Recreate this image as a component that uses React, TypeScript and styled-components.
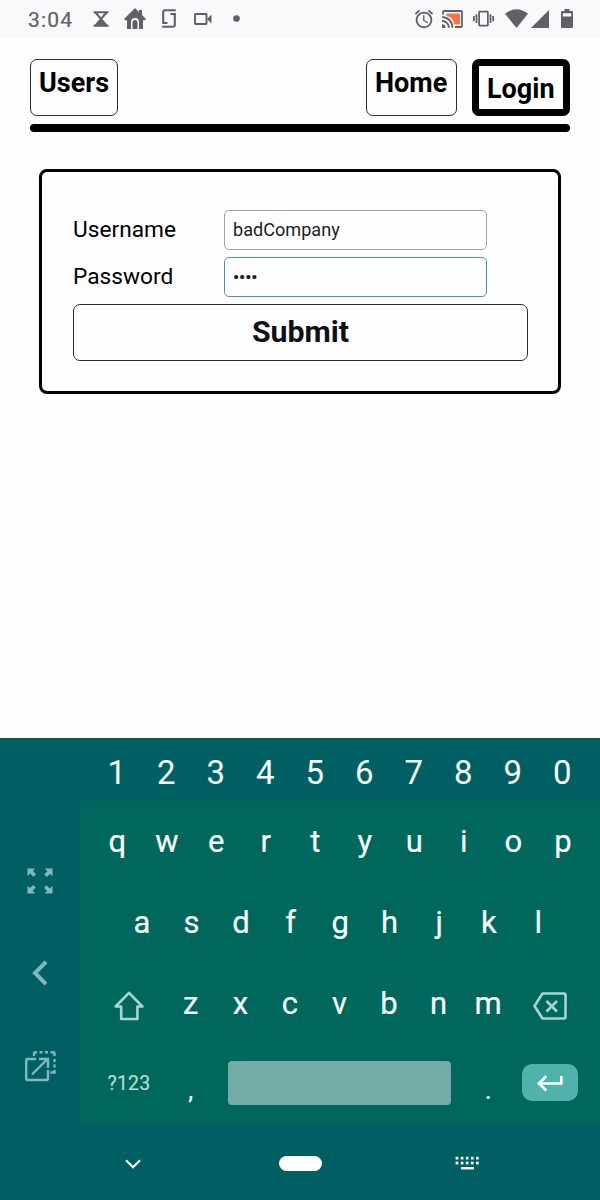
import React from "react";
import styled, { createGlobalStyle } from "styled-components";
import { MdAlarm, MdVibration } from "react-icons/md";

const GlobalStyle = createGlobalStyle`
  * { box-sizing: border-box; }
  body { margin: 0; background: #fefdff; font-family: Roboto, sans-serif; }
`;

const Screen = styled.div`
  width: 600px;
  height: 1200px;
  display: flex;
  flex-direction: column;
  overflow: hidden;
  background: #fefdff;
  color: #000;
`;

const StatusBar = styled.div`
  height: 38px;
  flex: none;
  display: flex;
  align-items: center;
  padding: 0 27px 1px;
  background: #f9f8fb;
  color: #626065;
`;

const Clock = styled.span`
  width: 46px;
  font-size: 21px;
  -webkit-text-stroke: 0.2px #626065;
  letter-spacing: 1.2px;
  line-height: 24px;
  padding: 2px 0 0 1px;
  white-space: nowrap;
`;

const StatusItem = styled.span<{ $gap: number }>`
  display: flex;
  margin-left: ${(p) => p.$gap}px;
`;

const StatusRight = styled.div`
  margin-left: auto;
  display: flex;
  align-items: center;
`;

const Header = styled.header`
  margin: 21px 30px 0;
  padding-bottom: 8px;
  display: flex;
  gap: 15px;
  height: 65px;
`;

const NavButton = styled.a<{ $active?: boolean }>`
  display: block;
  height: 57px;
  padding: 8px 8px 4px;
  border: ${(p) => (p.$active ? "7px solid #000" : "1.5px solid #2b2b2d")};
  border-radius: 7px;
  font-size: 27px;
  line-height: 31px;
  font-weight: 700;
  white-space: nowrap;
`;

const UsersLink = styled(NavButton)`
  width: 88px;
  margin-right: auto;
`;

const HomeLink = styled(NavButton)`
  width: 91px;
`;

const LoginLink = styled(NavButton)`
  width: 98px;
`;

const Rule = styled.hr`
  height: 8px;
  margin: 0 30px;
  border: 0;
  border-radius: 4px;
  background: #000;
  flex: none;
`;

const LoginForm = styled.form`
  margin: 37px 39px 0;
  height: 225px;
  flex: none;
  padding: 38px 31px 0;
  border: 3px solid #000;
  border-radius: 8px;
`;

const Field = styled.label`
  display: flex;
  align-items: center;
  height: 39px;
  margin-bottom: 8px;
`;

const FieldName = styled.span`
  width: 151px;
  font-size: 22.7px;
`;

const TextInput = styled.input<{ $focused?: boolean }>`
  width: 263px;
  height: 40px;
  padding: 0 8px;
  border: 1px solid ${(p) => (p.$focused ? "#4f8cc4" : "#a3a2a6")};
  border-radius: 5px;
  outline: 0;
  background: transparent;
  color: #1d1c20;
  font: ${(p) => (p.$focused ? "700 17px" : "18.1px")} Roboto, sans-serif;
`;

const Submit = styled.button`
  display: block;
  width: 455px;
  height: 57px;
  padding: 0 0 2px;
  border: 1.5px solid #2b2b2d;
  border-radius: 7px;
  background: transparent;
  color: #111014;
  font: 700 30.3px Roboto, sans-serif;
`;

const Keyboard = styled.section`
  margin-top: auto;
  height: 462px;
  flex: none;
  display: grid;
  grid-template: 387px 75px / 80px 520px;
  background: #005f63;
  color: #f7fffd;
`;

const SideRail = styled.div`
  display: flex;
  flex-direction: column;
  align-items: center;
  padding-top: 130px;
  color: #7fb8c0;
`;

const RailButton = styled.span<{ $height: number }>`
  height: ${(p) => p.$height}px;
  display: flex;
`;

const Keys = styled.div`
  display: flex;
  flex-direction: column;
`;

const NumberRow = styled.div`
  height: 63px;
  padding: 5px 13px 0 12px;
  display: grid;
  grid-template-columns: repeat(10, 1fr);
  align-items: center;
  text-align: center;
  font-size: 33px;
`;

const LetterPad = styled.div`
  height: 324px;
  display: grid;
  grid-template-rows: repeat(4, 81px);
  background: #00675d;
  -webkit-text-stroke: 0.2px currentColor;
`;

const LetterRow = styled.div<{ $inset?: number; $columns: string }>`
  padding: 0 ${(p) => (p.$inset ?? 0) + 12.4}px 0 ${(p) => (p.$inset ?? 0) + 12.6}px;
  display: grid;
  grid-template-columns: ${(p) => p.$columns};
  align-items: center;
  justify-items: center;
  font-size: 31px;
`;

const ShiftRow = styled(LetterRow)`
  padding: 0 13px 1px 12px;
`;

const BottomRow = styled(LetterRow)`
  padding: 0 13px 3px 12px;
`;

const IconKey = styled.span`
  display: flex;
  padding-top: 5px;
  color: #a9d5d1;
`;

const SymbolsKey = styled.span`
  color: #b4dbd6;
  font-size: 19.5px;
  letter-spacing: 0.2px;
`;

const PunctuationKey = styled.span`
  padding-top: 15px;
  font-size: 25px;
`;

const SpaceBar = styled.span`
  width: 223px;
  height: 44px;
  border-radius: 4px;
  background: #72aba8;
`;

const EnterKey = styled.span`
  width: 56px;
  height: 37px;
  margin-bottom: 2px;
  display: flex;
  align-items: center;
  justify-content: center;
  padding-top: 2px;
  border-radius: 10px;
  background: #4fb3ab;
`;

const SystemNav = styled.div`
  grid-column: 1 / 3;
  display: flex;
  align-items: center;
  justify-content: space-between;
  padding: 2px 120px 0 125px;
`;

const HomePill = styled.span`
  width: 43px;
  height: 15px;
  margin-left: 5px;
  border-radius: 8px;
  background: #fff;
`;

const HourglassIcon = () => (
  <svg width="16" height="16" viewBox="0 0 16 16" fill="none" stroke="currentColor" strokeWidth="2">
    <path d="M.5 1.2h15M.5 14.8h15" />
    <path d="M2.5 1.5 8 8l5.5-6.5M2.5 14.5 8 8l5.5 6.5" />
    <path d="M8 8.5 12 14H4z" fill="currentColor" stroke="none" />
  </svg>
);

const HouseIcon = () => (
  <svg width="22" height="21" viewBox="0 0 22 21" fill="currentColor">
    <path d="M11 0 15 4V2h3v5l4 4-1.2 1.2H19V21h-4v-7a4 4 0 0 0-8 0v7H3v-8.8H1.2L0 11z" />
    <path d="M8.500 21v-6.500a2.500 2.500 0 0 1 5 0V21z" />
  </svg>
);

const DeviceIcon = () => (
  <svg width="14" height="19" viewBox="0 0 14 19" fill="none" stroke="currentColor" strokeWidth="2.1">
    <path d="M5.500 14H1.200V3Q1.200 1.300 2.900 1.300H13.800" />
    <path d="M8.500 5H12.800V16q0 1.700-1.700 1.700H.200" />
  </svg>
);

const CameraIcon = () => (
  <svg width="18" height="12" viewBox="0 0 18 12" fill="none" stroke="currentColor" strokeWidth="1.9">
    <rect x="1" y="1" width="11.5" height="10" rx=".5" />
    <path d="M13 6 17.500 1.500v9z" fill="currentColor" stroke="none" />
  </svg>
);

const DotIcon = () => (
  <svg width="7" height="7" viewBox="0 0 7 7" fill="currentColor">
    <circle cx="3.5" cy="3.5" r="3.3" />
  </svg>
);

const CastIcon = () => (
  <svg width="21" height="18" viewBox="0 0 21 18" fill="none" stroke="currentColor" strokeWidth="1.8">
    <path d="M4.500 3.500h13.500v11h-5.700A10 10 0 0 0 4.500 6z" fill="#ff7043" stroke="none" />
    <path d="M1 4.500V2q0-1 1-1h17q1 0 1 1v14q0 1-1 1h-6" />
    <path d="M0 7.200A10.300 10.300 0 0 1 10.500 17.800M0 11a6.600 6.600 0 0 1 6.800 6.800" />
    <path d="M0 14.300A3.500 3.500 0 0 1 3.600 18H0z" fill="currentColor" stroke="none" />
  </svg>
);

const WifiIcon = () => (
  <svg width="23" height="19" viewBox="0 0 23 19" fill="currentColor">
    <path d="M0 4.800Q11.500-4.200 23 4.800L11.500 19z" />
  </svg>
);

const SignalIcon = () => (
  <svg width="18" height="18" viewBox="0 0 18 18" fill="currentColor">
    <path d="M18 0v18H0z" />
  </svg>
);

const BatteryIcon = () => (
  <svg width="12" height="19" viewBox="0 0 12 19" fill="currentColor">
    <path
      fillRule="evenodd"
      d="M3.5 0h5v2H11q1 0 1 1v15q0 1-1 1H1q-1 0-1-1V3q0-1 1-1h2.500zM1.800 4.200v3.200h8.400V4.200z"
    />
  </svg>
);

const ExpandIcon = () => (
  <svg width="26" height="26" viewBox="0 0 26 26" fill="currentColor">
    {[0, 90, 180, 270].map((angle) => (
      <path
        key={angle}
        transform={`rotate(${angle} 13 13)`}
        d="M.5.5h7.8L6 3l3 3.2-2.6 2.6L3.2 5.6.5 8.3z"
      />
    ))}
  </svg>
);

const BackIcon = () => (
  <svg width="16" height="26" viewBox="0 0 16 26" fill="none" stroke="currentColor" strokeWidth="4">
    <path d="M14 1.800 3 13l11 11.200" />
  </svg>
);

const PopOutIcon = () => (
  <svg width="31" height="31" viewBox="0 0 31 31" fill="none" stroke="currentColor" strokeWidth="2.4">
    <path d="M11 8H2.500Q1.200 8 1.200 9.500v18Q1.200 29 2.500 29h19q1.500 0 1.500-1.500V19" />
    <path d="M7 23.500 22 8.500M14 8h9v9" />
    <path d="M9 5V2.500Q9 1.200 10.500 1.200H12M14.500 1.200h3M20 1.200h3M25.500 1.200H28q1.500 0 1.500 1.300V5M29.500 8v3M29.500 13.500v3M29.500 19v2.500h-4" />
  </svg>
);

const ShiftIcon = () => (
  <svg width="30" height="30" viewBox="0 0 30 30" fill="none" stroke="currentColor" strokeWidth="2.6" strokeLinejoin="round">
    <path d="M15 1.800 28.400 15.500h-5V28H7.200V15.500H1.600z" />
  </svg>
);

const BackspaceIcon = () => (
  <svg width="34" height="28" viewBox="0 0 34 28" fill="none" stroke="currentColor" strokeWidth="2.6" strokeLinejoin="round">
    <path d="M9.500 1.500H31q1.500 0 1.500 1.500v22q0 1.500-1.500 1.500H9.500L1.500 14z" />
    <path d="m13.500 9 10.500 10.500M24 9 13.500 19.500" />
  </svg>
);

const EnterIcon = () => (
  <svg width="26" height="18" viewBox="0 0 26 18" fill="none" stroke="#fff" strokeWidth="2.7">
    <path d="M24.300 2v7.500H2M9.300 2 2 9.500 9.300 16.500" />
  </svg>
);

const HideIcon = () => (
  <svg width="16" height="10" viewBox="0 0 16 10" fill="none" stroke="#fff" strokeWidth="2.200">
    <path d="m1 1.200 7 7 7-7" />
  </svg>
);

const KeyboardIcon = () => (
  <svg width="25" height="15" viewBox="0 0 25 15" fill="#fff">
    {[0, 1, 2, 3, 4].map((i) => (
      <React.Fragment key={i}>
        <rect x={0.6 + i * 5.1} y="0.8" width="2.7" height="2.7" />
        <rect x={0.6 + i * 5.1} y="5.7" width="2.7" height="2.7" />
      </React.Fragment>
    ))}
    <rect x="6" y="11" width="13" height="2.4" />
  </svg>
);

const keys = (letters: string) => letters.split("").map((key) => <span key={key}>{key}</span>);

export default function App() {
  return (
    <Screen>
      <GlobalStyle />
      <StatusBar>
        <Clock>3:04</Clock>
        <StatusItem $gap={20}><HourglassIcon /></StatusItem>
        <StatusItem $gap={15}><HouseIcon /></StatusItem>
        <StatusItem $gap={16}><DeviceIcon /></StatusItem>
        <StatusItem $gap={18}><CameraIcon /></StatusItem>
        <StatusItem $gap={21}><DotIcon /></StatusItem>
        <StatusRight>
          <StatusItem $gap={0}><MdAlarm size={22} /></StatusItem>
          <StatusItem $gap={7}><CastIcon /></StatusItem>
          <StatusItem $gap={10}><MdVibration size={21} /></StatusItem>
          <StatusItem $gap={11}><WifiIcon /></StatusItem>
          <StatusItem $gap={3}><SignalIcon /></StatusItem>
          <StatusItem $gap={12}><BatteryIcon /></StatusItem>
        </StatusRight>
      </StatusBar>

      <Header>
        <UsersLink>Users</UsersLink>
        <HomeLink>Home</HomeLink>
        <LoginLink $active>Login</LoginLink>
      </Header>
      <Rule />

      <LoginForm>
        <Field>
          <FieldName>Username</FieldName>
          <TextInput type="text" defaultValue="badCompany" />
        </Field>
        <Field>
          <FieldName>Password</FieldName>
          <TextInput type="password" defaultValue="abcd" $focused />
        </Field>
        <Submit type="button">Submit</Submit>
      </LoginForm>

      <Keyboard>
        <SideRail>
          <RailButton $height={92}><ExpandIcon /></RailButton>
          <RailButton $height={91}><BackIcon /></RailButton>
          <RailButton $height={31}><PopOutIcon /></RailButton>
        </SideRail>
        <Keys>
          <NumberRow>{keys("1234567890")}</NumberRow>
          <LetterPad>
            <LetterRow $columns="repeat(10, 1fr)">{keys("qwertyuiop")}</LetterRow>
            <LetterRow $columns="repeat(9, 1fr)" $inset={24.5}>{keys("asdfghjkl")}</LetterRow>
            <ShiftRow $columns="74px repeat(7, 1fr) 74px">
              <IconKey><ShiftIcon /></IconKey>
              {keys("zxcvbnm")}
              <IconKey><BackspaceIcon /></IconKey>
            </ShiftRow>
            <BottomRow $columns="74px 1fr 5fr 1fr 74px">
              <SymbolsKey>?123</SymbolsKey>
              <PunctuationKey>,</PunctuationKey>
              <SpaceBar />
              <PunctuationKey>.</PunctuationKey>
              <EnterKey><EnterIcon /></EnterKey>
            </BottomRow>
          </LetterPad>
        </Keys>
        <SystemNav>
          <HideIcon />
          <HomePill />
          <KeyboardIcon />
        </SystemNav>
      </Keyboard>
    </Screen>
  );
}
